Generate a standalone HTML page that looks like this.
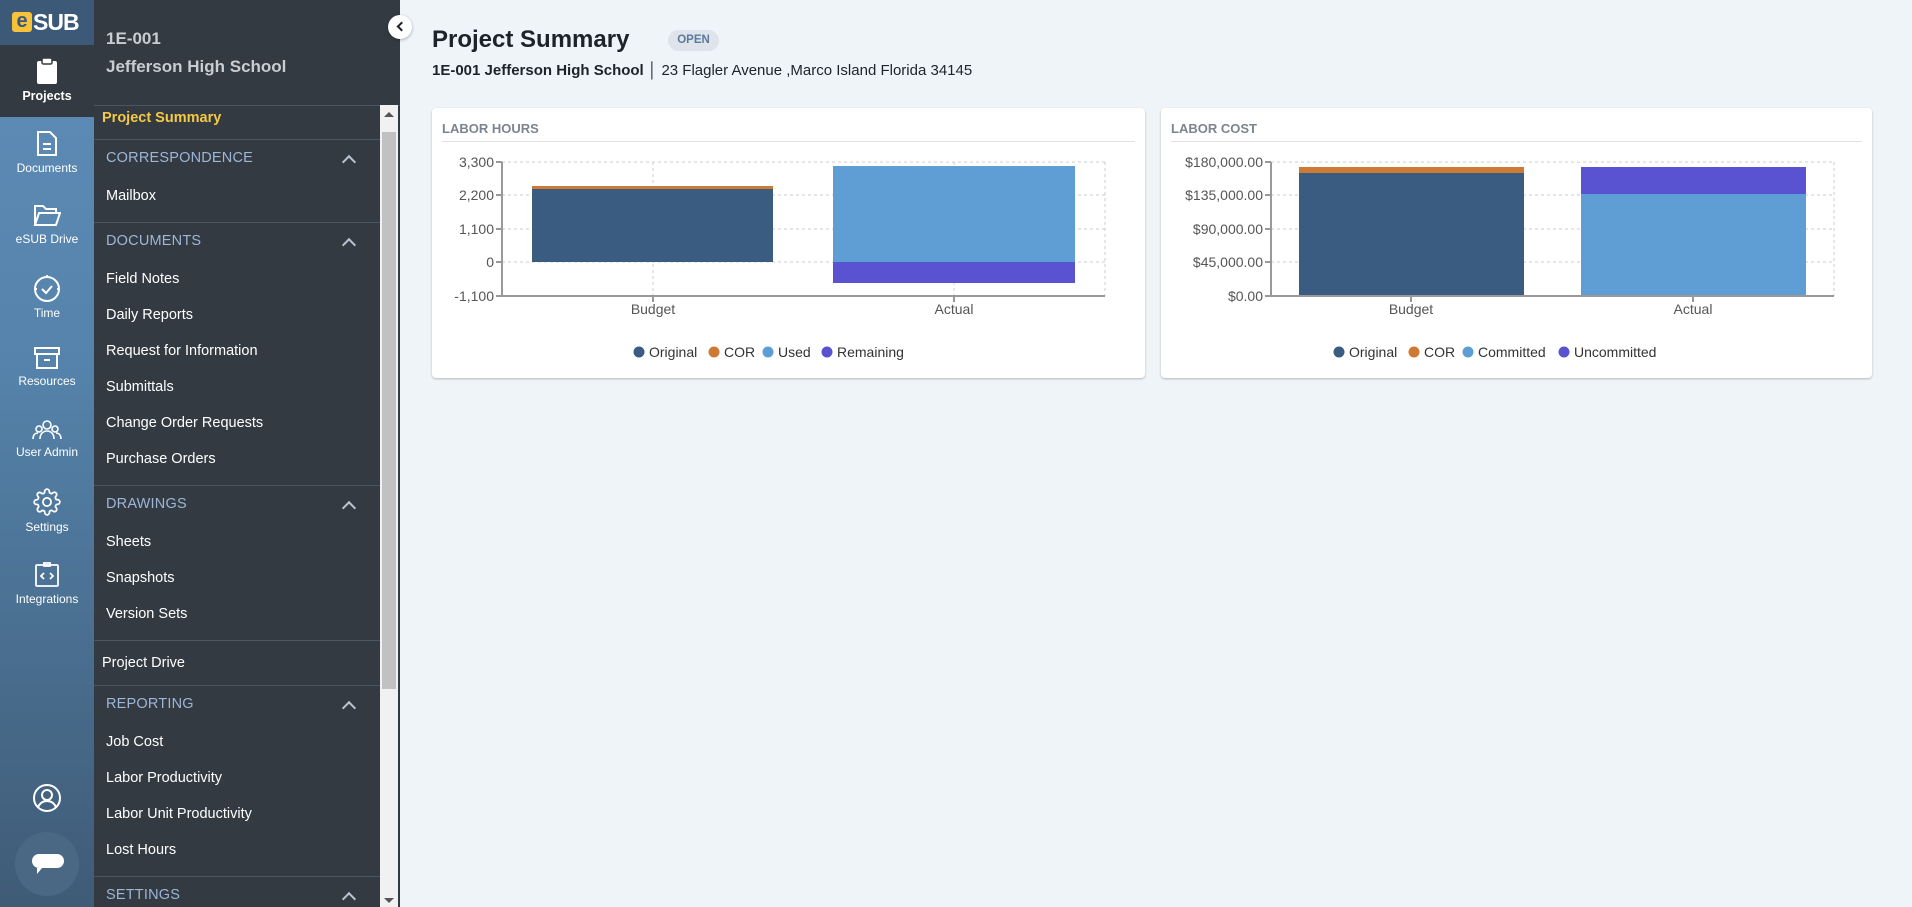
<!DOCTYPE html>
<html><head><meta charset="utf-8"><style>
*{margin:0;padding:0;box-sizing:border-box}
body{width:1912px;height:907px;overflow:hidden;background:#eff4f8;font-family:"Liberation Sans",Arial,sans-serif;position:relative}
.rail{position:absolute;left:0;top:0;width:94px;height:907px;background:linear-gradient(#5f8db8 0%,#5583ab 40%,#3f5b76 100%)}
.logo{position:absolute;left:0;top:0;width:94px;height:45px;background:#3c5a78}
.act{position:absolute;left:0;top:45px;width:94px;height:72px;background:#333a42}
.ri{position:absolute;left:0;width:94px;text-align:center;color:#fff;font-size:12px}
.ri svg{display:block;margin:0 auto 4px}
.nav{position:absolute;left:94px;top:0;width:306px;height:907px;background:#333a42}
.nh{position:absolute;left:12px;color:#c9cdd2;font-weight:bold;font-size:17px}
.it{position:absolute;left:12px;color:#fff;font-size:14.5px}
.sec{position:absolute;left:12px;color:#9db6d6;font-size:14.5px;letter-spacing:.2px}
.chev{position:absolute;left:250px;width:10px;height:10px;border-left:2px solid #b8c4d2;border-top:2px solid #b8c4d2;transform:rotate(45deg)}
.dv{position:absolute;left:0;width:286px;height:1px;background:#4d5560}
.sb{position:absolute;left:380px;top:105px;width:18px;height:802px;background:#f1f1f1}
.card{position:absolute;top:108px;height:270px;background:#fff;border-radius:4px;box-shadow:0 1px 2px rgba(0,0,0,.25)}
.ct{position:absolute;left:10px;top:13px;color:#7b8590;font-weight:bold;font-size:13px}
.cl{position:absolute;left:10px;right:10px;top:33px;height:1px;background:#dde1e5}
</style></head><body>
<div class="rail"></div>
<div class="logo"><div style="position:absolute;left:12px;top:12px;width:20px;height:20px;background:#f5c23a;border-radius:3px;color:#3c5a78;font-weight:bold;font-size:20px;line-height:19px;text-align:center">e</div><div style="position:absolute;left:33px;top:9px;color:#fff;font-weight:bold;font-size:23px;letter-spacing:-1px">SUB</div></div>
<div class="act"></div>
<div class="ri" style="top:57px"><svg width="22" height="28" viewBox="0 0 22 28"><rect x="1" y="4" width="20" height="23" rx="2" fill="#fff"/><rect x="6" y="1" width="10" height="6" rx="1.5" fill="#fff" stroke="#333a42" stroke-width="1.5"/></svg><b style="font-size:12.5px">Projects</b></div>
<div class="ri" style="top:130px"><svg width="22" height="27" viewBox="0 0 22 27" fill="none" stroke="#fff" stroke-width="2"><path d="M2 2h12l6 6v17H2z"/><path d="M7 14h8M7 19h8"/></svg>Documents</div>
<div class="ri" style="top:204px"><svg width="28" height="24" viewBox="0 0 28 24" fill="none" stroke="#fff" stroke-width="2"><path d="M2 21V2h8l3 3h10v4"/><path d="M2 21l4-12h21l-4 12z"/></svg>eSUB Drive</div>
<div class="ri" style="top:274px"><svg width="28" height="28" viewBox="0 0 28 28" fill="none" stroke="#fff" stroke-width="2"><circle cx="14" cy="15" r="12"/><path d="M9 15l4 4 6-7"/><path d="M14 1v3M26 15h-2M4 15h-2"/></svg>Time</div>
<div class="ri" style="top:346px"><svg width="28" height="24" viewBox="0 0 28 24" fill="none" stroke="#fff" stroke-width="2"><rect x="2" y="2" width="24" height="6"/><path d="M4 8v14h20V8M11 14h6"/></svg>Resources</div>
<div class="ri" style="top:419px"><svg width="30" height="22" viewBox="0 0 30 22" fill="none" stroke="#fff" stroke-width="1.6"><circle cx="15" cy="6" r="4"/><circle cx="7" cy="10" r="3"/><circle cx="23" cy="10" r="3"/><path d="M8 20c0-5 3-8 7-8s7 3 7 8M1 20c0-4 2-6 5-6M29 20c0-4-2-6-5-6"/></svg>User Admin</div>
<div class="ri" style="top:488px"><svg width="28" height="28" viewBox="0 0 24 24" fill="none" stroke="#fff" stroke-width="1.5"><circle cx="12" cy="12" r="3.5"/><path d="M19.4 15a1.65 1.65 0 0 0 .33 1.82l.06.06a2 2 0 0 1 0 2.83 2 2 0 0 1-2.83 0l-.06-.06a1.65 1.65 0 0 0-1.82-.33 1.65 1.65 0 0 0-1 1.51V21a2 2 0 0 1-2 2 2 2 0 0 1-2-2v-.09A1.65 1.65 0 0 0 9 19.4a1.650 1.65 0 0 0-1.820.33l-.06.06a2 2 0 0 1-2.83 0 2 2 0 0 1 0-2.83l.06-.06a1.65 1.65 0 0 0 .33-1.82 1.65 1.65 0 0 0-1.51-1H3a2 2 0 0 1-2-2 2 2 0 0 1 2-2h.09A1.65 1.65 0 0 0 4.6 9a1.65 1.65 0 0 0-.33-1.82l-.06-.06a2 2 0 0 1 0-2.83 2 2 0 0 1 2.83 0l.06.06a1.65 1.65 0 0 0 1.82.33H9a1.65 1.65 0 0 0 1-1.51V3a2 2 0 0 1 2-2 2 2 0 0 1 2 2v.09a1.65 1.65 0 0 0 1 1.51 1.65 1.65 0 0 0 1.82-.33l.06-.06a2 2 0 0 1 2.83 0 2 2 0 0 1 0 2.83l-.06.06a1.65 1.65 0 0 0-.33 1.82V9a1.65 1.65 0 0 0 1.51 1H21a2 2 0 0 1 2 2 2 2 0 0 1-2 2h-.09a1.65 1.65 0 0 0-1.51 1z"/></svg>Settings</div>
<div class="ri" style="top:561px"><svg width="26" height="27" viewBox="0 0 26 27" fill="none" stroke="#fff" stroke-width="1.8"><rect x="2" y="4" width="22" height="21" rx="1"/><path d="M10 2h6v3h-6zM10 12l-3 3 3 3M16 12l3 3-3 3"/></svg>Integrations</div>
<svg style="position:absolute;left:32px;top:783px" width="30" height="30" viewBox="0 0 30 30" fill="none" stroke="#fff" stroke-width="2"><circle cx="15" cy="15" r="13"/><circle cx="15" cy="12" r="5"/><path d="M6 24c2-4 5-6 9-6s7 2 9 6"/></svg>
<div style="position:absolute;left:15px;top:832px;width:64px;height:64px;border-radius:50%;background:#4a6784"></div>
<svg style="position:absolute;left:31px;top:853px" width="34" height="24" viewBox="0 0 34 24"><rect x="1" y="1" width="32" height="14" rx="7" fill="#fff"/><path d="M6 15v6l5-6z" fill="#fff"/></svg>

<div class="nav">
<div class="nh" style="top:29px">1E-001</div>
<div class="nh" style="top:57px">Jefferson High School</div>
<div class="dv" style="top:105px;width:306px"></div>
<div style="position:absolute;left:8px;top:110px;color:#f6c945;font-weight:bold;font-size:14.5px">Project Summary</div>
<div class="dv" style="top:139px"></div>
<div class="sec" style="top:150px">CORRESPONDENCE</div><div class="chev" style="top:157px"></div>
<div class="it" style="top:188px">Mailbox</div>
<div class="dv" style="top:222px"></div>
<div class="sec" style="top:233px">DOCUMENTS</div><div class="chev" style="top:240px"></div>
<div class="it" style="top:271px">Field Notes</div>
<div class="it" style="top:307px">Daily Reports</div>
<div class="it" style="top:343px">Request for Information</div>
<div class="it" style="top:379px">Submittals</div>
<div class="it" style="top:415px">Change Order Requests</div>
<div class="it" style="top:451px">Purchase Orders</div>
<div class="dv" style="top:485px"></div>
<div class="sec" style="top:496px">DRAWINGS</div><div class="chev" style="top:503px"></div>
<div class="it" style="top:534px">Sheets</div>
<div class="it" style="top:570px">Snapshots</div>
<div class="it" style="top:606px">Version Sets</div>
<div class="dv" style="top:640px"></div>
<div class="it" style="left:8px;top:655px">Project Drive</div>
<div class="dv" style="top:685px"></div>
<div class="sec" style="top:696px">REPORTING</div><div class="chev" style="top:703px"></div>
<div class="it" style="top:734px">Job Cost</div>
<div class="it" style="top:770px">Labor Productivity</div>
<div class="it" style="top:806px">Labor Unit Productivity</div>
<div class="it" style="top:842px">Lost Hours</div>
<div class="dv" style="top:876px"></div>
<div class="sec" style="top:887px">SETTINGS</div><div class="chev" style="top:894px"></div>
</div>
<div class="sb"><div style="position:absolute;left:4px;top:7px;border:5px solid transparent;border-bottom:5px solid #555;border-top:0"></div><div style="position:absolute;left:2px;top:27px;width:14px;height:557px;background:#c1c1c1"></div><div style="position:absolute;left:4px;top:793px;border:5px solid transparent;border-top:5px solid #555;border-bottom:0"></div></div>
<div style="position:absolute;left:388px;top:15px;width:24px;height:24px;border-radius:50%;background:#fff;box-shadow:0 1px 3px rgba(0,0,0,.3)"><div style="position:absolute;left:10px;top:8px;width:7px;height:7px;border-left:2px solid #222;border-bottom:2px solid #222;transform:rotate(45deg)"></div></div>

<div style="position:absolute;left:432px;top:26px;font-size:24px;font-weight:bold;color:#1e232a">Project Summary</div>
<div style="position:absolute;left:668px;top:30px;width:51px;height:21px;border-radius:11px;background:#dfe4ea;color:#5b7a9c;font-size:11.5px;font-weight:bold;text-align:center;line-height:21px">OPEN</div>
<div style="position:absolute;left:432px;top:62px;font-size:15px;color:#1e232a"><b>1E-001 Jefferson High School</b> │ 23 Flagler Avenue ,Marco Island Florida 34145</div>

<div class="card" style="left:432px;width:713px"><div class="ct">LABOR HOURS</div><div class="cl"></div></div>
<div class="card" style="left:1161px;width:711px"><div class="ct">LABOR COST</div><div class="cl"></div></div>

<svg style="position:absolute;left:0;top:0" width="1912" height="907" font-family="Liberation Sans,Arial,sans-serif" font-size="14" fill="#555">
<g stroke="#ccc" stroke-dasharray="3,3" stroke-width="1">
<path d="M502 162H1105M502 195H1105M502 229H1105M502 262H1105M1105 162V296M653 162V296M954 162V296"/>
<path d="M1271 162H1834M1271 195H1834M1271 229H1834M1271 262H1834M1834 162V296"/>
</g>
<rect x="532" y="189" width="241" height="73" fill="#3a5c80"/><rect x="532" y="186" width="241" height="3" fill="#cd7b32"/>
<rect x="833" y="166" width="242" height="96" fill="#5f9dd5"/><rect x="833" y="262" width="242" height="21" fill="#5952d1"/>
<rect x="1299" y="173" width="225" height="123" fill="#3a5c80"/><rect x="1299" y="167" width="225" height="6" fill="#cd7b32"/>
<rect x="1581" y="194" width="225" height="102" fill="#5f9dd5"/><rect x="1581" y="167" width="225" height="27" fill="#5952d1"/>
<g stroke="#999" stroke-width="2" fill="none"><path d="M502 162V296H1105M496 162H502M496 195H502M496 229H502M496 262H502M496 296H502M653 296V302M954 296V302"/>
<path d="M1271 162V296H1834M1265 162H1271M1265 195H1271M1265 229H1271M1265 262H1271M1265 296H1271M1411 296V302M1693 296V302"/></g>
<g text-anchor="end"><text x="494" y="167">3,300</text><text x="494" y="200">2,200</text><text x="494" y="234">1,100</text><text x="494" y="267">0</text><text x="494" y="301">-1,100</text>
<text x="1263" y="167">$180,000.00</text><text x="1263" y="200">$135,000.00</text><text x="1263" y="234">$90,000.00</text><text x="1263" y="267">$45,000.00</text><text x="1263" y="301">$0.00</text></g>
<g text-anchor="middle"><text x="653" y="314">Budget</text><text x="954" y="314">Actual</text><text x="1411" y="314">Budget</text><text x="1693" y="314">Actual</text></g>
<g fill="#333"><circle cx="639" cy="352" r="5.5" fill="#3a5c80"/><text x="649" y="357">Original</text><circle cx="714" cy="352" r="5.5" fill="#cd7b32"/><text x="724" y="357">COR</text><circle cx="768" cy="352" r="5.5" fill="#5f9dd5"/><text x="778" y="357">Used</text><circle cx="827" cy="352" r="5.5" fill="#5952d1"/><text x="837" y="357">Remaining</text>
<circle cx="1339" cy="352" r="5.5" fill="#3a5c80"/><text x="1349" y="357">Original</text><circle cx="1414" cy="352" r="5.5" fill="#cd7b32"/><text x="1424" y="357">COR</text><circle cx="1468" cy="352" r="5.5" fill="#5f9dd5"/><text x="1478" y="357">Committed</text><circle cx="1564" cy="352" r="5.5" fill="#5952d1"/><text x="1574" y="357">Uncommitted</text></g>
</svg>
</body></html>
